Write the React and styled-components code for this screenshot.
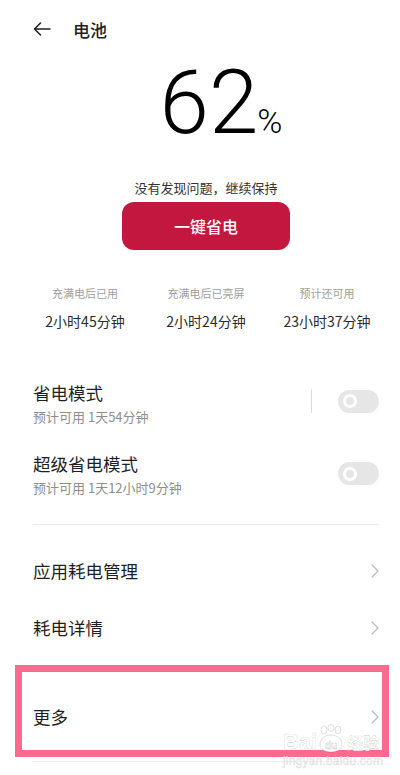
import React from "react";
import styled, { createGlobalStyle } from "styled-components";

const Global = createGlobalStyle`
  html, body {
    margin: 0;
    padding: 0;
    background: #fff;
  }
  body {
    font-family: "Noto Sans CJK SC", "Noto Sans", sans-serif;
    color: #1f1f1f;
  }
`;

const Page = styled.div`
  position: relative;
  width: 400px;
  height: 775px;
  overflow: hidden;
  background: #fff;
  padding: 0 21px 0 33px;
  box-sizing: border-box;
`;

const Header = styled.div`
  display: flex;
  align-items: center;
  gap: 22px;
  height: 58px;
`;

const Title = styled.div`
  font-size: 17px;
  font-weight: 500;
  line-height: 24px;
  margin-top: 2px;
`;

const Level = styled.div`
  display: flex;
  justify-content: center;
  align-items: baseline;
  padding-left: 30px;
  font-family: Roboto, "Liberation Sans", sans-serif;
  font-weight: 300;
  color: #000;
`;

const Digits = styled.span`
  font-size: 89px;
  line-height: 89px;
`;

const Percent = styled.span`
  font-size: 34px;
  line-height: 34px;
  margin-left: -1px;
`;

const Status = styled.div`
  margin-top: 31px;
  text-align: center;
  font-size: 13px;
  line-height: 20px;
  color: #333;
`;

const SaveButton = styled.button`
  display: block;
  margin: 4px auto 0;
  width: 168px;
  height: 48px;
  border: none;
  border-radius: 12px;
  background: #c3173f;
  color: #fff;
  font-family: inherit;
  font-size: 16px;
  font-weight: 500;
`;

const Stats = styled.div`
  display: grid;
  grid-template-columns: repeat(3, 121px);
  justify-content: center;
  margin-top: 34px;
`;

const Stat = styled.div`
  text-align: center;
`;

const StatLabel = styled.div`
  font-size: 11px;
  line-height: 18px;
  color: #9e9e9e;
`;

const StatValue = styled.div`
  margin-top: 9px;
  font-size: 14px;
  line-height: 20px;
  color: #2b2b2b;
`;

const Switches = styled.div`
  margin-top: 38px;
`;

const SwitchRow = styled.div`
  display: flex;
  align-items: flex-start;
  height: 71px;
  padding-top: 12px;
  box-sizing: border-box;
`;

const RowText = styled.div`
  flex: 1;
`;

const RowTitle = styled.div`
  font-size: 17.5px;
  line-height: 24px;
  color: #1f1f1f;
`;

const RowSub = styled.div`
  margin-top: 4px;
  font-size: 13px;
  line-height: 16px;
  color: #8e8e8e;
`;

const Controls = styled.div`
  display: flex;
  align-items: center;
  gap: 26px;
  margin-top: ${({ $offset }) => $offset}px;
`;

const VLine = styled.span`
  width: 1px;
  height: 24px;
  background: #dcdcdc;
`;

const Toggle = styled.span`
  position: relative;
  display: block;
  width: 41px;
  height: 23px;
  border-radius: 12px;
  background: #e6e6e6;
`;

const Knob = styled.span`
  position: absolute;
  left: 5px;
  top: 4.5px;
  width: 14px;
  height: 14px;
  box-sizing: border-box;
  border: 3px solid #fff;
  border-radius: 50%;
`;

const Rule = styled.div`
  height: 1px;
  background: #ededed;
  margin-top: ${({ $top }) => $top}px;
`;

const LinkRow = styled.div`
  display: flex;
  align-items: center;
  justify-content: space-between;
  height: 57px;
  margin-top: ${({ $top = 0 }) => $top}px;
  font-size: 17.5px;
  color: #1f1f1f;
`;

const Highlight = styled.div`
  position: absolute;
  left: 15px;
  top: 665px;
  width: 374px;
  height: 92px;
  box-sizing: border-box;
  border: 7px solid #fd6a90;
`;

const Watermark = styled.div`
  position: absolute;
  left: 283px;
  top: 724px;
  color: #fff;
  -webkit-text-stroke: 0.6px rgba(0, 0, 0, 0.16);
  font-family: "Liberation Sans", sans-serif;
  font-weight: 700;
`;

const MarkTop = styled.div`
  display: flex;
  align-items: flex-end;
  font-size: 22px;
  line-height: 24px;
  height: 30px;
`;

const MarkCn = styled.span`
  font-family: "Noto Sans CJK SC", sans-serif;
  font-size: 16px;
  margin-left: 2px;
`;

const MarkUrl = styled.div`
  font-size: 12px;
  line-height: 14px;
  font-weight: 400;
  letter-spacing: 0.2px;
`;

const BackArrow = () => (
  <svg width="18" height="14" viewBox="0 0 18 14" fill="none">
    <path
      d="M17 7H1.5M7.5 1L1.5 7l6 6"
      stroke="#222"
      strokeWidth="1.6"
      strokeLinecap="round"
      strokeLinejoin="round"
    />
  </svg>
);

const Chevron = () => (
  <svg width="8" height="14" viewBox="0 0 8 14" fill="none">
    <path d="M1 1l6 6-6 6" stroke="#bdbdbd" strokeWidth="1.3" strokeLinecap="round" strokeLinejoin="round" />
  </svg>
);

const Paw = () => (
  <svg width="28" height="30" viewBox="0 0 28 30" fill="#fff" stroke="rgba(0,0,0,0.16)" strokeWidth="0.8">
    <ellipse cx="7" cy="6" rx="3" ry="4" />
    <ellipse cx="14" cy="4" rx="3" ry="3.6" />
    <ellipse cx="21" cy="6" rx="3" ry="4" />
    <path d="M3 20c0-5 5-9 11-9s11 4 11 9c0 5-4 8-11 8S3 25 3 20z" />
    <text x="14" y="25" fontSize="10" fontFamily="Liberation Sans" fontWeight="700" textAnchor="middle">du</text>
  </svg>
);

const stats = [
  { label: "充满电后已用", value: "2小时45分钟" },
  { label: "充满电后已亮屏", value: "2小时24分钟" },
  { label: "预计还可用", value: "23小时37分钟" },
];

export default function App() {
  return (
    <>
      <Global />
      <Page>
        <Header>
          <BackArrow />
          <Title>电池</Title>
        </Header>

        <Level>
          <Digits>62</Digits>
          <Percent>%</Percent>
        </Level>

        <Status>没有发现问题，继续保持</Status>
        <SaveButton>一键省电</SaveButton>

        <Stats>
          {stats.map((s) => (
            <Stat key={s.label}>
              <StatLabel>{s.label}</StatLabel>
              <StatValue>{s.value}</StatValue>
            </Stat>
          ))}
        </Stats>

        <Switches>
          <SwitchRow>
            <RowText>
              <RowTitle>省电模式</RowTitle>
              <RowSub>预计可用 1天54分钟</RowSub>
            </RowText>
            <Controls $offset={8}>
              <VLine />
              <Toggle>
                <Knob />
              </Toggle>
            </Controls>
          </SwitchRow>
          <SwitchRow>
            <RowText>
              <RowTitle>超级省电模式</RowTitle>
              <RowSub>预计可用 1天12小时9分钟</RowSub>
            </RowText>
            <Controls $offset={10}>
              <Toggle>
                <Knob />
              </Toggle>
            </Controls>
          </SwitchRow>
        </Switches>

        <Rule $top={13} />

        <LinkRow $top={17}>
          应用耗电管理
          <Chevron />
        </LinkRow>
        <LinkRow>
          耗电详情
          <Chevron />
        </LinkRow>
        <LinkRow $top={32}>
          更多
          <Chevron />
        </LinkRow>

        <Rule $top={16} />

        <Highlight />
        <Watermark>
          <MarkTop>
            Bai
            <Paw />
            <MarkCn>经验</MarkCn>
          </MarkTop>
          <MarkUrl>jingyan.baidu.com</MarkUrl>
        </Watermark>
      </Page>
    </>
  );
}
